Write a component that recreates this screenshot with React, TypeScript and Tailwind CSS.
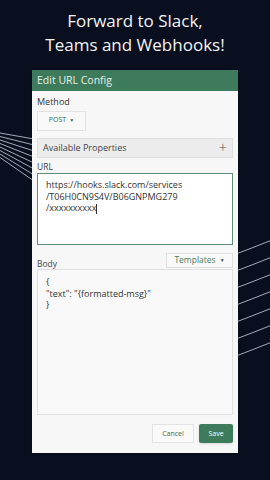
export default function App() {
  const font = { fontFamily: '"Open Sans", "Noto Sans", sans-serif' }
  return (
    <div className="relative w-[270px] h-[480px] overflow-hidden bg-[#0a0f1f]" style={font}>
      <svg className="absolute left-0 top-0" width="270" height="480" viewBox="0 0 270 480" fill="none">
        {[0, 1, 2, 3, 4, 5, 6, 7].map((i) => (
          <path key={'l' + i} d={`M0 ${133 + i * 3.5} L34 ${139 + i * 6}`} stroke="#b8bcc8" strokeWidth="0.9" />
        ))}
        {[0, 1, 2, 3, 4, 5, 6].map((i) => (
          <path key={'r' + i} d={`M236 ${254 + i * 17} Q252 ${248 + i * 17} 272 ${240 + i * 17}`} stroke="#b8bcc8" strokeWidth="0.9" />
        ))}
      </svg>
      <div className="relative flex flex-col items-center">
        <div className="pt-[9px] text-center text-[17px] leading-[24px] text-[#f1f3f5]">
          <div>Forward to Slack,</div>
          <div>Teams and Webhooks!</div>
        </div>
        <div className="mt-[13px] w-[206px] h-[383px] bg-[#f7f7f7] flex flex-col shadow">
          <div className="h-[21px] bg-[#3d7b5c] flex items-center px-[5px] text-[10.5px] text-[#e6efe9]">Edit URL Config</div>
          <div className="flex-1 flex flex-col px-[5px]">
            <div className="mt-[4px] text-[9px] text-[#333]">Method</div>
            <div className="mt-[2px] w-[49px] h-[20px] border border-[#e2e2e2] bg-[#f9f9f9] flex items-center justify-center gap-[3px] text-[7px] text-[#2f6b4f]">
              POST
              <span className="text-[5px]">▼</span>
            </div>
            <div className="mt-[7px] h-[20px] border border-[#dedede] bg-[#ececec] flex items-center justify-between pl-[5px] pr-[5px] text-[9px] text-[#444]">
              Available Properties
              <span className="text-[15px] leading-none text-[#555] font-light">+</span>
            </div>
            <div className="mt-[3px] text-[8.5px] text-[#444]">URL</div>
            <div className="h-[72px] border border-[#5f8d76] bg-white px-[8px] pt-[5px] text-[9px] leading-[11.5px] text-[#333]">
              <div>https://hooks.slack.com/services</div>
              <div>/T06H0CN9S4V/B06GNPMG279</div>
              <div>
                /xxxxxxxxxx<span className="inline-block w-[1px] h-[10px] bg-[#333] align-middle" />
              </div>
            </div>
            <div className="mt-[8px] flex items-end justify-between">
              <span className="text-[8.5px] text-[#444] mb-[-2px]">Body</span>
              <div className="w-[67px] h-[15px] border border-[#e0e0e0] bg-[#f9f9f9] flex items-center justify-center gap-[4px] text-[8.5px] text-[#4a7d65]">
                Templates
                <span className="text-[5px] text-[#444]">▼</span>
              </div>
            </div>
            <div className="mt-[1px] h-[146px] border border-[#e0e0e0] bg-[#f9f9f9] px-[8px] pt-[6px] text-[9px] leading-[11.5px] text-[#333]">
              <div>{'{'}</div>
              <div>"text": "{'{'}formatted-msg{'}'}"</div>
              <div>{'}'}</div>
            </div>
            <div className="mt-[9px] flex justify-end gap-[5px]">
              <div className="w-[42px] h-[19px] border border-[#e2e2e2] bg-[#fafafa] flex items-center justify-center text-[7px] text-[#3a6b54]">Cancel</div>
              <div className="w-[34px] h-[19px] bg-[#3d7b5c] rounded-[2px] shadow flex items-center justify-center text-[7px] text-white">Save</div>
            </div>
          </div>
        </div>
      </div>
    </div>
  )
}
